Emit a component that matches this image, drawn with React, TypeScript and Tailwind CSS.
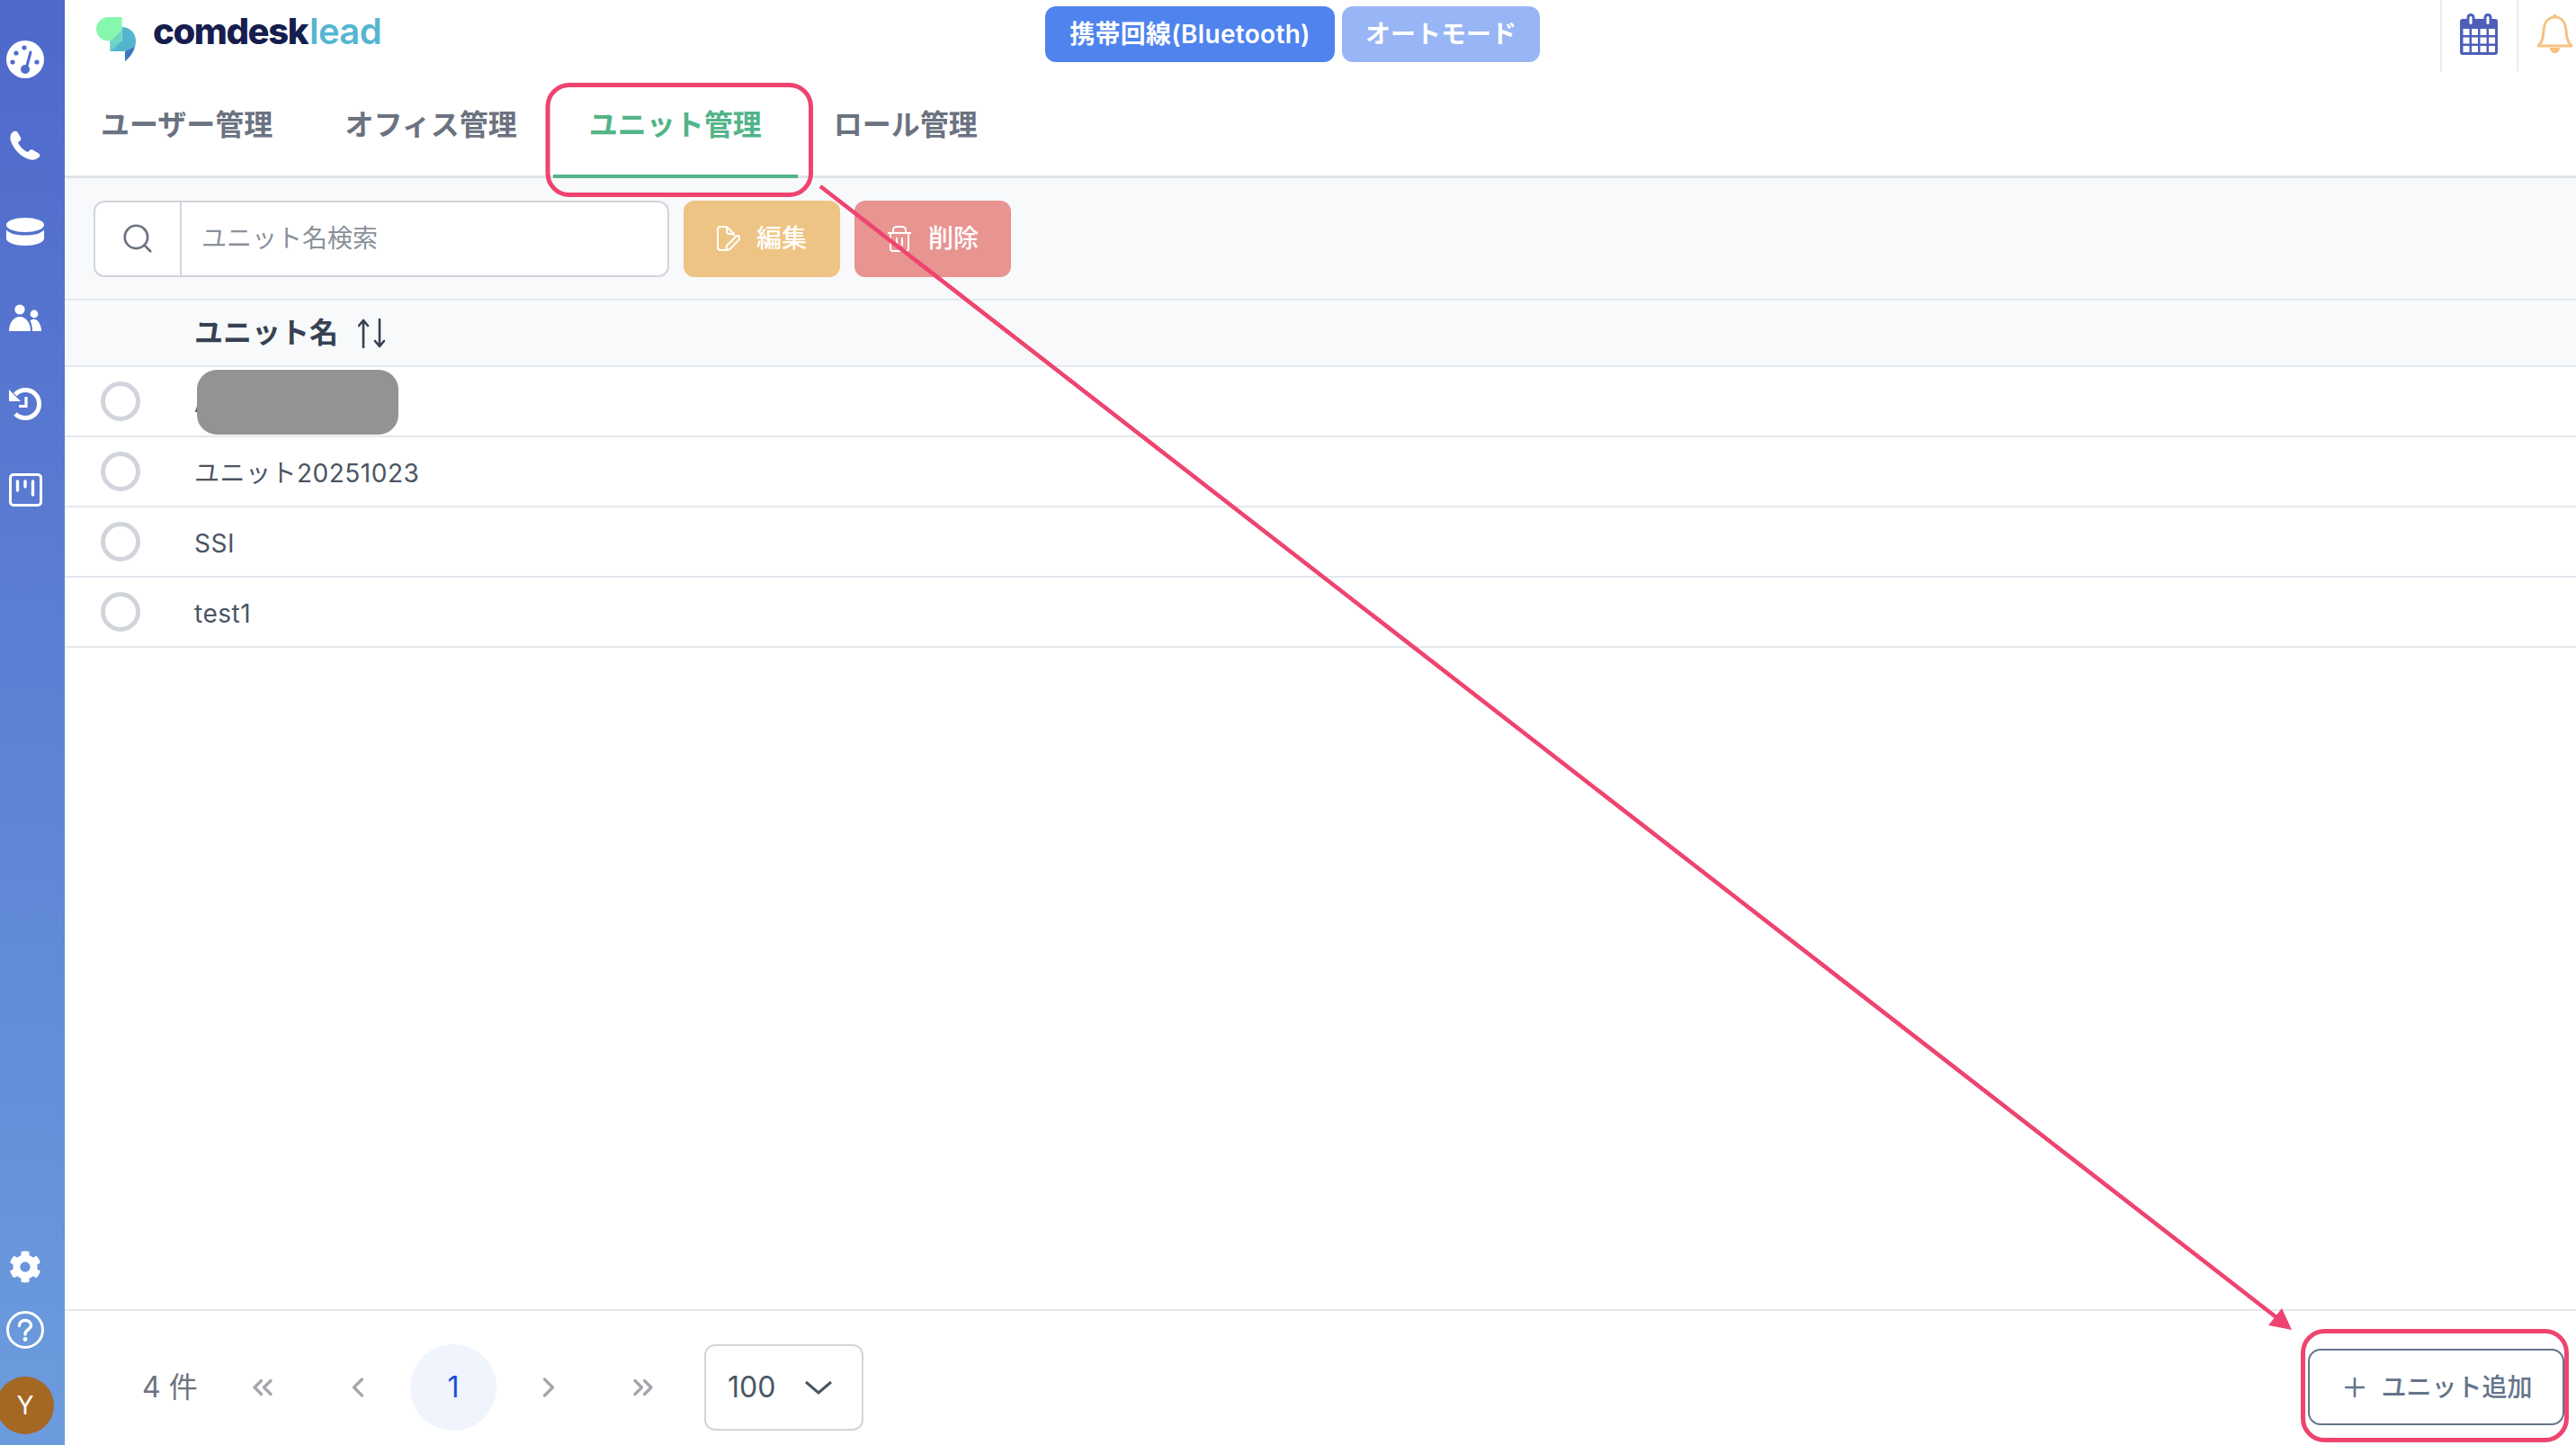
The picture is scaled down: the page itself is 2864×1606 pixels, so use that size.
import { ChevronLeft, ChevronRight, ChevronsLeft, ChevronsRight, Plus, Search } from "lucide-react";
import { FaCog } from "react-icons/fa";

const TABS = ["ユーザー管理", "オフィス管理", "ユニット管理", "ロール管理"];
const ROWS = ["A", "ユニット20251023", "SSI", "test1"];

function DashIcon() {
  return (
    <svg width="42" height="42" viewBox="0 0 42 42">
      <circle cx="21" cy="21" r="21" fill="#fff" />
      <circle cx="11" cy="14" r="2.6" fill="#4f6ccd" />
      <circle cx="20" cy="8" r="2.6" fill="#4f6ccd" />
      <circle cx="7" cy="24" r="2.6" fill="#4f6ccd" />
      <circle cx="34" cy="24" r="2.6" fill="#4f6ccd" />
      <path d="M27 13 L23 28" stroke="#4f6ccd" strokeWidth="3" strokeLinecap="round" />
      <circle cx="21" cy="32" r="5" fill="#4f6ccd" />
    </svg>
  );
}

function PhoneIcon() {
  return (
    <svg width="34" height="33" viewBox="0 0 34 33" fill="#fff">
      <path d="M2 3 C4 0.5 7 0 8.5 2 L12 8 C12.8 9.6 12 11 10.5 12 L9 13.2 C11 18 15 22 20 24 L21.5 22.5 C22.8 21.2 24.2 21 25.6 21.8 L32 25.4 C33.8 26.6 33.8 28.6 32 30 C28.5 33 25 33.4 21 32 C11 28.6 3.5 20 0.8 11 C0 8 0.4 5 2 3 Z" />
    </svg>
  );
}

function DbIcon() {
  return (
    <svg width="42" height="31" viewBox="0 0 42 31" fill="#fff">
      <ellipse cx="21" cy="8" rx="21" ry="8" />
      <path d="M0 13.5 C4 18 12 19.6 21 19.6 C30 19.6 38 18 42 13.5 V23 C42 27.5 32 31 21 31 C10 31 0 27.5 0 23 Z" />
    </svg>
  );
}

function UsersIcon() {
  return (
    <svg width="36" height="30" viewBox="0 0 36 30" fill="#fff">
      <circle cx="12" cy="6" r="5.6" />
      <circle cx="28" cy="11" r="4.4" />
      <path d="M0 30 C0 21 5 14 12 14 C19 14 24 21 24 30 Z" />
      <path d="M26 30 C26 25 25 21 23.5 18.5 C25 17 27 16.5 29 17 C33 18 36 24 36 30 Z" />
    </svg>
  );
}

function HistoryIcon() {
  return (
    <svg width="36" height="36" viewBox="0 0 36 36" fill="none">
      <path d="M7 7.5 C10 4 14 2.5 18.5 2.5 C26.5 2.5 33.5 9 33.5 18 C33.5 27 26.5 33.5 18.5 33.5 C14 33.5 10 32 7 29" stroke="#fff" strokeWidth="5" />
      <path d="M0 2 L13 15 H0 Z" fill="#fff" />
      <path d="M19 10 V20.5 H11" stroke="#fff" strokeWidth="3.2" />
    </svg>
  );
}

function BoardIcon() {
  return (
    <svg width="37" height="37" viewBox="0 0 37 37" fill="none" stroke="#fff">
      <rect x="1.5" y="1.5" width="34" height="34" rx="3.5" strokeWidth="3" />
      <path d="M9.5 9 V19 M18 9 V15 M26.5 9 V24" strokeWidth="3.4" strokeLinecap="round" />
    </svg>
  );
}

function HelpIcon() {
  return (
    <svg width="42" height="42" viewBox="0 0 42 42" fill="none">
      <circle cx="21" cy="21" r="19.5" stroke="#fff" strokeWidth="3" />
      <path d="M14.5 16.5 C14.5 12.5 17.5 10.5 21 10.5 C24.5 10.5 27.5 12.8 27.5 16 C27.5 20.5 21 20.5 21 26" stroke="#fff" strokeWidth="3.4" strokeLinecap="round" />
      <circle cx="21" cy="31.5" r="2.4" fill="#fff" />
    </svg>
  );
}

function LogoMark() {
  return (
    <svg width="44" height="49" viewBox="0 0 44 49" className="shrink-0">
      <path d="M28.5 0 H14 C6 0 0 6 0 13.2 C0 20.5 6 26.5 14 26.5 H15.5 L28.5 14 Z" fill="#86f8ad" />
      <path d="M28.5 11 C37.5 11 44 18 44 26.5 C44 29 43.5 31.5 42.8 33.8 L32 38 H15.5 V26.5 L28.5 26.5 Z" fill="#54b5cf" />
      <path d="M15.5 26.5 L28.5 14 V26.5 H15.5 Z" fill="#6ed8bd" />
      <path d="M15.5 26.5 H28.5 L15.5 38 Z" fill="#6dd2c6" />
      <path d="M32 38 L43 33 C41 40 37 45 32 49 Z" fill="#3a78bf" />
    </svg>
  );
}

function CalendarIcon() {
  return (
    <svg width="42" height="46" viewBox="0 0 42 46">
      <rect x="0" y="6" width="42" height="40" rx="3" fill="#4e5fb8" />
      <rect x="7.5" y="0" width="9" height="15" rx="4.5" fill="#4e5fb8" />
      <rect x="26.5" y="0" width="9" height="15" rx="4.5" fill="#4e5fb8" />
      <rect x="10.5" y="3" width="3" height="9" rx="1.5" fill="#fff" />
      <rect x="29.5" y="3" width="3" height="9" rx="1.5" fill="#fff" />
      {[17, 26.5, 36].map((y) =>
        [3.5, 13, 22.5, 32].map((x) => (
          <rect key={`${x}-${y}`} x={x} y={y} width="7" height="7" fill="#fff" />
        ))
      )}
    </svg>
  );
}

function BellIcon() {
  return (
    <svg width="41" height="45" viewBox="0 0 41 45" fill="none" stroke="#f5c282">
      <path d="M2 36 C7 31 7.5 26 8 19 C8.6 10 13 4 20.5 4 C28 4 32.4 10 33 19 C33.5 26 34 31 39 36 Z" strokeWidth="3" strokeLinejoin="round" />
      <circle cx="20.5" cy="2.5" r="2" fill="#f5c282" stroke="none" />
      <path d="M15 38 C15 46 26 46 26 38 Z" fill="#f5c282" stroke="none" />
    </svg>
  );
}

function EditIcon() {
  return (
    <svg width="26" height="28" viewBox="0 0 26 28" fill="none" stroke="#fff" strokeWidth="2" strokeLinejoin="round">
      <path d="M12 27 H4 C2 27 1 26 1 24 V4 C1 2 2 1 4 1 H11 L19 9 V11" />
      <path d="M11 1 V6 C11 8 12 9 14 9 H19" />
      <path d="M10 27 L11 22 L21 12 C22.5 10.8 24 11 25 12 C25.8 13.2 25.6 14.4 24.6 15.4 L14.5 26 Z" />
    </svg>
  );
}

function TrashIcon() {
  return (
    <svg width="28" height="29" viewBox="0 0 28 29" fill="none" stroke="#fff" strokeWidth="2">
      <path d="M1 8 H27" />
      <path d="M7 8 V5 C7 2.5 9 1 11 1 H17 C19 1 21 2.5 21 5 V8" />
      <path d="M4 8 V25 C4 27 5 28 7 28 H21 C23 28 24 27 24 25 V8" />
      <path d="M11 13 V22 M17 13 V22" />
    </svg>
  );
}

function SortIcon() {
  return (
    <svg width="30" height="33" viewBox="0 0 30 33" fill="none" stroke="#374151" strokeWidth="2.6" strokeLinecap="round" strokeLinejoin="round">
      <path d="M6 32 V2 M1 8 L6 2 L11 8" />
      <path d="M24 1 V31 M19 25 L24 31 L29 25" />
    </svg>
  );
}

// annotation marks drawn over the screenshot
function Annotations() {
  return (
    <svg className="absolute inset-0 pointer-events-none" width="2864" height="1606" fill="none">
      <rect x="609" y="94.5" width="292.5" height="122" rx="24" stroke="#ee446f" strokeWidth="5" />
      <rect x="2560.5" y="1479.5" width="293" height="121" rx="24" stroke="#ee446f" strokeWidth="5" />
      <path d="M912 207 L2532 1465" stroke="#ee446f" strokeWidth="4.6" />
      <path d="M2548 1478 L2522 1473 L2537 1454 Z" fill="#ee446f" />
    </svg>
  );
}

function Sidebar() {
  return (
    <aside className="w-[72px] h-full shrink-0 flex flex-col items-center pr-4 pt-[18px] pb-3 overflow-hidden bg-linear-to-b from-[#4f68cb] to-[#6c9cdd]">
      {[DashIcon, PhoneIcon, DbIcon, UsersIcon, HistoryIcon, BoardIcon].map((Icon, i) => (
        <div key={i} className="h-[95.8px] shrink-0 flex items-center justify-center">
          <Icon />
        </div>
      ))}
      <div className="mt-auto flex flex-col items-center gap-[31px]">
        <FaCog className="text-white text-[36px]" />
        <HelpIcon />
        <div className="w-16 h-16 rounded-full bg-[#a56724] text-white text-[28px] flex items-center justify-center shrink-0">
          Y
        </div>
      </div>
    </aside>
  );
}

function Header() {
  return (
    <div className="h-20 flex shrink-0">
      <div className="w-[1090px] pl-[35px] pt-[19px] flex items-start shrink-0">
        <LogoMark />
        <div className="ml-[19px] -mt-[12px] flex text-[40px] leading-[56px] font-extrabold">
          <span className="text-[#161d4f] tracking-[-1.4px]">comdesk</span>
          <span className="ml-[2px] font-semibold tracking-[-0.6px] text-[#55b6d1]">lead</span>
        </div>
      </div>
      <div className="flex gap-2 pt-[7px]">
        <div className="w-[322px] h-[62px] rounded-xl bg-[#4f83ee] text-white text-[28px] font-semibold tracking-[0.3px] flex items-center justify-center">
          携帯回線(Bluetooth)
        </div>
        <div className="w-[220px] h-[62px] rounded-xl bg-[#98b5f5] text-white text-[28px] font-semibold flex items-center justify-center">
          オートモード
        </div>
      </div>
      <div className="ml-auto flex">
        <div className="w-[85px] border-l-2 border-[#ebedf0] pl-[20px] pt-[15px]">
          <CalendarIcon />
        </div>
        <div className="w-[66px] border-l-2 border-[#ebedf0] pl-[20px] pt-[15px]">
          <BellIcon />
        </div>
      </div>
    </div>
  );
}

function Tabs() {
  return (
    <div className="h-[118px] flex shrink-0 border-b-[3px] border-[#e0e4ea]">
      {TABS.map((tab) => {
        const active = tab === "ユニット管理";
        return (
          <div
            key={tab}
            className={
              active
                ? "h-[118px] px-10 pt-1 flex items-center text-[32px] font-semibold text-[#52b488] border-b-4 border-[#52b488]"
                : "h-[118px] px-10 flex items-center text-[32px] font-semibold text-[#6b7280]"
            }
          >
            {tab}
          </div>
        );
      })}
    </div>
  );
}

function Toolbar() {
  return (
    <div className="h-[136px] shrink-0 flex items-center gap-4 px-8 bg-[#f8f9fb] border-b-2 border-[#e2e8ee]">
      <div className="w-[640px] h-[85px] flex bg-white border-2 border-[#d1d5db] rounded-xl">
        <div className="w-[96px] border-r-2 border-[#d1d5db] flex items-center justify-center">
          <Search size={38} strokeWidth={1.7} className="text-[#6b7280]" />
        </div>
        <div className="pl-[22px] flex items-center text-[28px] text-[#8a9099]">ユニット名検索</div>
      </div>
      <div className="w-[174px] h-[85px] rounded-xl bg-[#eec485] text-white text-[28px] font-medium flex items-center justify-center gap-[18px]">
        <EditIcon />
        編集
      </div>
      <div className="w-[174px] h-[85px] rounded-xl bg-[#e89491] text-white text-[28px] font-medium flex items-center justify-center gap-[18px]">
        <TrashIcon />
        削除
      </div>
    </div>
  );
}

function UnitTable() {
  return (
    <div className="flex-1">
      <div className="h-[74px] pl-[144px] flex items-center gap-[22px] bg-[#f8f9fb] border-b-2 border-[#e2e8ee] text-[32px] font-bold text-[#374151]">
        ユニット名
        <SortIcon />
      </div>
      {ROWS.map((name, i) => (
        <div key={name} className="relative h-[78px] pl-10 flex items-center gap-[60px] border-b-2 border-[#e2e8ee] text-[28px] text-[#4b5563]">
          <span className="w-11 h-11 rounded-full bg-white border-[5px] border-[#d1d5db] shrink-0" />
          <span className="pt-[3px] tracking-[0.5px]">{name}</span>
          {i === 0 && <div className="absolute left-[147px] top-[3px] w-[224px] h-[72px] rounded-[22px] bg-[#939393]" />}
        </div>
      ))}
    </div>
  );
}

function Footer() {
  return (
    <div className="h-[151px] shrink-0 border-t-2 border-[#e2e8ee] flex items-center pt-5 pl-[86px] pr-[13px]">
      <div className="w-[81px] text-[32px] text-[#6b7280] whitespace-nowrap">4 件</div>
      <div className="w-[106px] flex justify-center text-[#a3a6ab]">
        <ChevronsLeft size={36} strokeWidth={2.2} />
      </div>
      <div className="w-[106px] flex justify-center text-[#a3a6ab]">
        <ChevronLeft size={36} strokeWidth={2.2} />
      </div>
      <div className="w-[106px] flex justify-center">
        <div className="w-24 h-24 rounded-full bg-[#f0f4fd] text-[#1d4ed8] text-[32px] flex items-center justify-center">1</div>
      </div>
      <div className="w-[105px] flex justify-center text-[#a3a6ab]">
        <ChevronRight size={36} strokeWidth={2.2} />
      </div>
      <div className="w-[105px] flex justify-center text-[#a3a6ab]">
        <ChevronsRight size={36} strokeWidth={2.2} />
      </div>
      <div className="ml-4 w-[177px] h-24 border-2 border-[#d1d5db] rounded-xl flex items-center pl-6 text-[32px] text-[#4b5563]">
        100
        <svg width="32" height="16" viewBox="0 0 32 16" fill="none" stroke="#4b5563" strokeWidth="3" className="ml-[32px]">
          <path d="M2 2 L16 14 L30 2" />
        </svg>
      </div>
      <div className="ml-auto w-[285px] h-[85px] border-2 border-[#64748b] rounded-[14px] flex items-center justify-center gap-[12px] text-[28px] font-medium text-[#64748b]">
        <Plus size={34} strokeWidth={1.8} />
        ユニット追加
      </div>
    </div>
  );
}

export default function App() {
  return (
    <div className="relative w-[2864px] h-[1606px] flex overflow-hidden bg-white font-['Inter','Noto_Sans_CJK_JP',sans-serif]">
      <Sidebar />
      <main className="flex-1 flex flex-col min-w-0">
        <Header />
        <Tabs />
        <Toolbar />
        <UnitTable />
        <Footer />
      </main>
      <Annotations />
    </div>
  );
}
